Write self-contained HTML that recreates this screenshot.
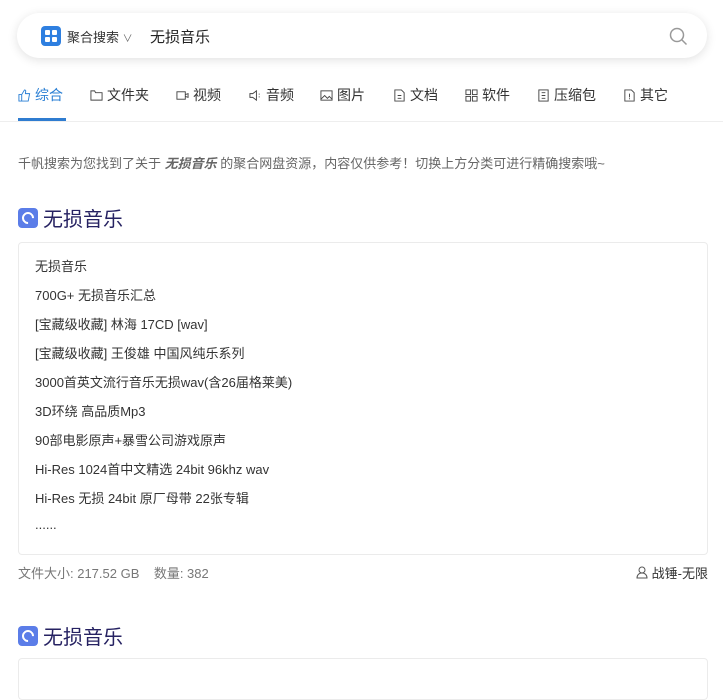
<!DOCTYPE html><html><head><meta charset="utf-8"><style>
body{margin:0;width:723px;height:672px;overflow:hidden;background:#fff;font-family:"Liberation Sans","Noto Sans CJK SC",sans-serif;position:relative}
.a{position:absolute}
.search{left:17px;top:13px;width:690px;height:45px;border-radius:23px;background:#fff;box-shadow:0 2px 10px rgba(0,0,0,.12)}
.tab{position:absolute;top:85px;font-size:14px;color:#333;display:flex;align-items:center;gap:4px;height:20px}
.tab svg{width:13px;height:13px}
.box{left:18px;width:688px;border:1px solid #ebebeb;border-radius:4px}
.ln{position:absolute;left:35px;font-size:13px;color:#333}
.title{font-size:20px;color:#262262;display:flex;align-items:center;gap:5px}
.ic{width:20px;height:20px;border-radius:4px;background:#5b7de8;position:relative}
.ic:after{content:"";position:absolute;left:4px;top:4px;width:8px;height:8px;border:2.5px solid #fff;border-radius:50%;border-right-color:transparent;transform:rotate(45deg)}
</style></head><body>
<div class="a search"></div>
<div class="a" style="left:41px;top:26px;width:20px;height:20px;border-radius:4px;background:#2e7fe0">
<div class="a" style="left:4px;top:4px;width:5px;height:5px;background:#fff;border-radius:1px"></div><div class="a" style="left:11px;top:4px;width:5px;height:5px;background:#fff;border-radius:1px"></div><div class="a" style="left:4px;top:11px;width:5px;height:5px;background:#fff;border-radius:1px"></div><div class="a" style="left:11px;top:11px;width:5px;height:5px;background:#fff;border-radius:1px"></div></div>
<div class="a" style="left:67px;top:27px;font-size:13px;color:#333">聚合搜索 <span style="font-size:10px;color:#666">∨</span></div>
<div class="a" style="left:150px;top:26px;font-size:15px;color:#222">无损音乐</div>
<svg class="a" style="left:669px;top:27px" width="19" height="19" viewBox="0 0 19 19" fill="none" stroke="#999" stroke-width="1.5"><circle cx="8" cy="8" r="6.5"/><path d="M13 13l4.5 4.5"/></svg>
<div class="tab" style="left:18px;color:#2a7fd4"><svg viewBox="0 0 14 14" fill="none" stroke="#2a7fd4"><path d="M1 6h3v7H1zM4 6l3-5c1.5 0 1.5 1 1.2 2L8 5h4.5l-1.5 8H4"/></svg>综合</div>
<div class="tab" style="left:90px"><svg viewBox="0 0 14 14" fill="none" stroke="#444"><path d="M1 2h4l1 2h7v8H1z"/></svg>文件夹</div>
<div class="tab" style="left:176px"><svg viewBox="0 0 14 14" fill="none" stroke="#444"><rect x="1" y="3" width="9" height="8"/><path d="M10 6l3-1v4l-3-1"/></svg>视频</div>
<div class="tab" style="left:249px"><svg viewBox="0 0 14 14" fill="none" stroke="#444"><path d="M1 5h3l4-3v10l-4-3H1zM11 5v1M11 8v1"/></svg>音频</div>
<div class="tab" style="left:320px"><svg viewBox="0 0 14 14" fill="none" stroke="#444"><rect x="1" y="2" width="12" height="10"/><path d="M1 11l4-4 3 3 2-2 3 3"/></svg>图片</div>
<div class="tab" style="left:393px"><svg viewBox="0 0 14 14" fill="none" stroke="#444"><path d="M2 1h7l3 3v9H2zM5 7h4M5 10h4"/></svg>文档</div>
<div class="tab" style="left:465px"><svg viewBox="0 0 14 14" fill="none" stroke="#444"><rect x="1" y="1" width="5" height="5"/><rect x="8" y="1" width="5" height="5"/><rect x="1" y="8" width="5" height="5"/><rect x="8" y="8" width="5" height="5"/></svg>软件</div>
<div class="tab" style="left:537px"><svg viewBox="0 0 14 14" fill="none" stroke="#444"><rect x="2" y="1" width="10" height="12"/><path d="M5 4h4M5 7h4M5 10h4"/></svg>压缩包</div>
<div class="tab" style="left:623px"><svg viewBox="0 0 14 14" fill="none" stroke="#444"><path d="M2 1h7l3 3v9H2zM7 5v4M7 10v1"/></svg>其它</div>
<div class="a" style="left:0;top:121px;width:723px;height:1px;background:#eee"></div>
<div class="a" style="left:18px;top:118px;width:48px;height:3px;background:#2f7cd0"></div>
<div class="a" style="left:18px;top:153px;font-size:13px;color:#666">千帆搜索为您找到了关于 <b><i>无损音乐</i></b> 的聚合网盘资源，内容仅供参考！切换上方分类可进行精确搜索哦~</div>
<div class="a title" style="left:18px;top:203px"><div class="ic"></div>无损音乐</div>
<div class="a box" style="top:242px;height:311px"></div>
<div class="ln" style="top:256px">无损音乐</div>
<div class="ln" style="top:285px">700G+ 无损音乐汇总</div>
<div class="ln" style="top:314px">[宝藏级收藏] 林海 17CD [wav]</div>
<div class="ln" style="top:343px">[宝藏级收藏] 王俊雄 中国风纯乐系列</div>
<div class="ln" style="top:372px">3000首英文流行音乐无损wav(含26届格莱美)</div>
<div class="ln" style="top:401px">3D环绕 高品质Mp3</div>
<div class="ln" style="top:430px">90部电影原声+暴雪公司游戏原声</div>
<div class="ln" style="top:459px">Hi-Res 1024首中文精选 24bit 96khz wav</div>
<div class="ln" style="top:488px">Hi-Res 无损 24bit 原厂母带 22张专辑</div>
<div class="ln" style="top:517px">......</div>
<div class="a" style="left:18px;top:563px;font-size:13px;color:#777">文件大小: 217.52 GB &nbsp;&nbsp; 数量: 382</div>
<div class="a" style="right:15px;top:563px;font-size:13px;color:#333;display:flex;align-items:center;gap:4px"><svg width="12" height="13" viewBox="0 0 12 13" fill="none" stroke="#555"><circle cx="6" cy="4" r="3"/><path d="M1 12c0-3 2-5 5-5s5 2 5 5z"/></svg>战锤-无限</div>
<div class="a title" style="left:18px;top:621px"><div class="ic"></div>无损音乐</div>
<div class="a box" style="top:658px;height:40px"></div>
</body></html>
